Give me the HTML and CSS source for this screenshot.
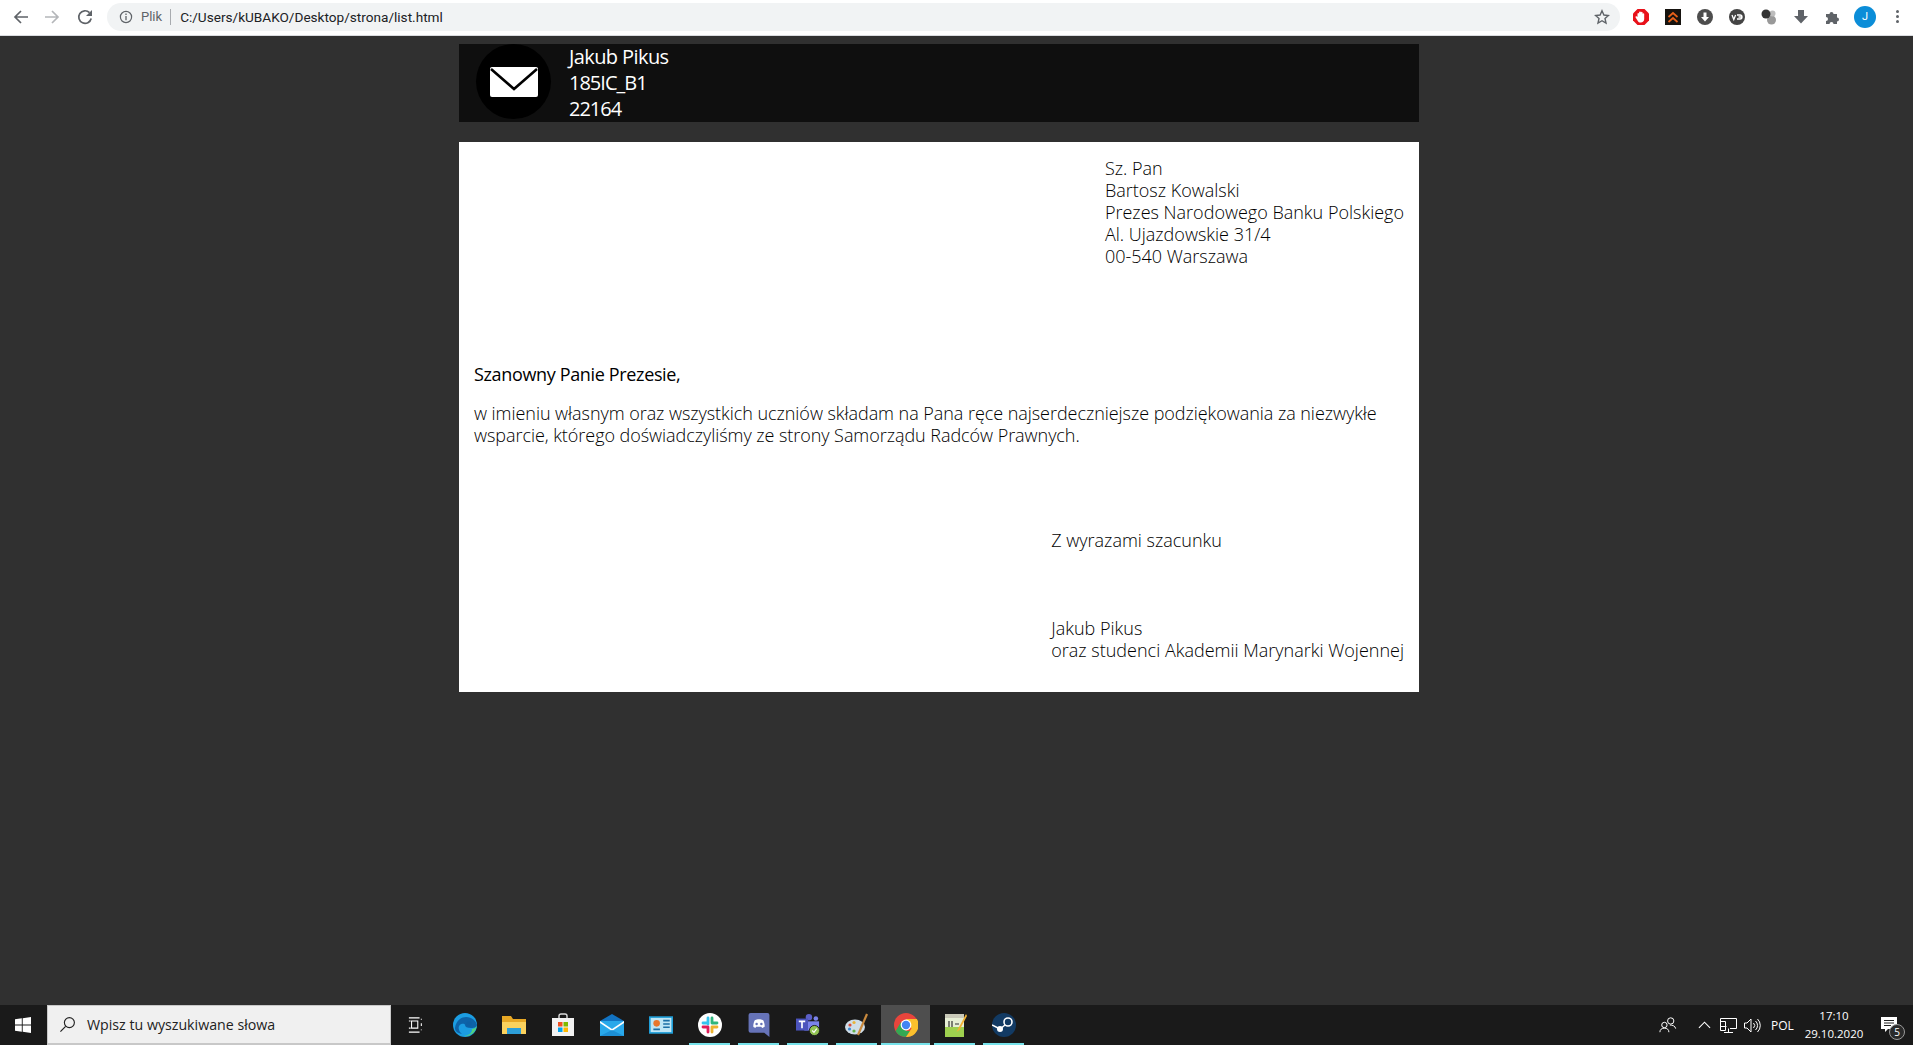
FILE: index.html
```html
<!DOCTYPE html>
<html lang="pl">
<head>
<meta charset="utf-8">
<title>list</title>
<link rel="stylesheet" href="styles.css">
</head>
<body>
<div class="toolbar">
  <div class="navs">
    <svg class="nav" viewBox="0 0 16 16"><path d="M15 8H2M8 2 2 8l6 6" fill="none" stroke="#5f6368" stroke-width="1.700"/></svg>
    <svg class="nav" viewBox="0 0 16 16"><path d="M1 8h13M8 2l6 6-6 6" fill="none" stroke="#b4b6b9" stroke-width="1.700"/></svg>
    <svg class="nav" viewBox="0 0 16 16"><path d="M14.200 9.500A6.300 6.300 0 1 1 12.500 3.600" fill="none" stroke="#5f6368" stroke-width="1.700"/><path d="M15 1v6H9z" fill="#5f6368"/></svg>
  </div>
  <div class="omnibox">
    <svg class="info" viewBox="0 0 14 14"><circle cx="7" cy="7" r="5.600" fill="none" stroke="#5f6368" stroke-width="1.200"/><path d="M7 6v4.200M7 3.600v1.400" stroke="#5f6368" stroke-width="1.300"/></svg>
    <span class="plik">Plik</span>
    <span class="sep"></span>
    <span class="url">C:/Users/kUBAKO/Desktop/strona/list.html</span>
    <svg class="star" viewBox="0 0 16 16"><path d="m8 1.800 1.900 4.200 4.500.5-3.400 3 1 4.500L8 11.700 4 14l1-4.500-3.400-3 4.500-.5z" fill="none" stroke="#5f6368" stroke-width="1.400"/></svg>
  </div>
  <div class="exts">
    <span class="ext"><svg viewBox="1 1 16 16"><path d="M5.500 1h7L17 5.500v7L12.500 17h-7L1 12.500v-7z" fill="#e8111a"/><path d="M5.500 9V5.500a1 1 0 0 1 1.600 0V4a1 1 0 0 1 1.800 0v.5a1 1 0 0 1 1.700 0v1.300a1 1 0 0 1 1.600 0V11c0 2.300-1.500 3.500-3.400 3.500-2 0-2.800-1-3.600-2.600L3.600 9.500c-.4-1 .8-1.700 1.400-.9z" fill="#fff"/></svg></span>
    <span class="ext"><svg viewBox="0 0 16 16"><rect width="16" height="16" fill="#16130f"/><path d="m3.500 8 4.500-4 4.500 4M3.500 13 8 9l4.500 4" fill="none" stroke="#e8611a" stroke-width="1.700"/></svg></span>
    <span class="ext"><svg viewBox="0 0 16 16"><circle cx="8" cy="8" r="8" fill="#4d4d4d"/><path d="M6.500 3.500h3V8h2.500L8 12.500 4 8h2.500z" fill="#fff"/></svg></span>
    <span class="ext"><svg viewBox="0 0 16 16"><circle cx="8" cy="8" r="8" fill="#444"/><path d="m3 6 1.800 4.500L6.600 6M8 6h3a2 2 0 0 1 0 4H8M9.500 8H13" fill="none" stroke="#fff" stroke-width="1.300"/></svg></span>
    <span class="ext"><svg viewBox="0 0 16 16"><circle cx="10.500" cy="11" r="4.500" fill="#999"/><circle cx="11.500" cy="4.500" r="3" fill="#bdbdbd"/><circle cx="5" cy="5" r="4.500" fill="#333"/></svg></span>
    <span class="ext"><svg viewBox="0 0 16 16"><path d="M5 1h6v6h4l-7 7.500L1 7h4z" fill="#5f6368"/></svg></span>
    <span class="ext"><svg viewBox="0 0 16 16"><path d="M1 5h3.500a2 2 0 1 1 4 0H12v3.500a2 2 0 1 1 0 4V15H8.500a2 2 0 1 0-4 0H1v-3a2 2 0 1 0 0-4z" fill="#5f6368"/></svg></span>
    <span class="avatar">J</span>
    <span class="dots"><i></i><i></i><i></i></span>
  </div>
</div>

<main class="page">
  <header class="banner">
    <div class="disc">
      <svg class="envelope" viewBox="0 0 48 30"><rect width="48" height="30" rx="2" fill="#fff"/><path d="M1 2 24 22 47 2" fill="none" stroke="#000" stroke-width="2.600"/></svg>
    </div>
    <div class="who">
      <div>Jakub Pikus</div>
      <div class="num">185IC_B1</div>
      <div class="num">22164</div>
    </div>
  </header>
  <article class="letter">
    <address class="to">
      Sz. Pan<br>
      Bartosz Kowalski<br>
      Prezes Narodowego Banku Polskiego<br>
      Al. Ujazdowskie 31/4<br>
      00-540 Warszawa
    </address>
    <p class="hello">Szanowny Panie Prezesie,</p>
    <p class="body">w imieniu własnym oraz wszystkich uczniów składam na Pana ręce najserdeczniejsze podziękowania za niezwykłe wsparcie, którego doświadczyliśmy ze strony Samorządu Radców Prawnych.</p>
    <div class="sign">
      <p class="regards">Z wyrazami szacunku</p>
      <p>Jakub Pikus<br>oraz studenci Akademii Marynarki Wojennej</p>
    </div>
  </article>
</main>

<footer class="taskbar">
  <svg class="win" viewBox="0 0 16 16"><path d="M0 2.300 6.800 1.300v6.200H0zM7.700 1.200 16 0v7.500H7.700zM0 8.400h6.800v6.300L0 13.700zM7.700 8.400H16V16l-8.300-1.200z" fill="#fff"/></svg>
  <div class="search">
    <svg class="glass" viewBox="0 0 18 18"><circle cx="11" cy="7" r="5.300" fill="none" stroke="#222" stroke-width="1.200"/><path d="M7 11 1.500 16.500" stroke="#222" stroke-width="1.300"/></svg>
    <span>Wpisz tu wyszukiwane słowa</span>
  </div>
  <div class="apps">
    <span class="app"><svg viewBox="0 0 18 18" class="s16"><path d="M1 1h12M1 17h12M4 4.500h7v8H4z M1 4.500h2M1 12.500h2M15 2v1M15 7v3M15 14v1" fill="none" stroke="#fff" stroke-width="1.200"/></svg></span>
    <span class="app"><svg viewBox="0 0 24 24"><circle cx="12" cy="12" r="12" fill="#1b9de2"/><path d="M2 15C3 7 9 4 13 4c6 0 10 4 11 8-1 3-4 3-6 3-4 0-6-1-6-3 0-1-3-2-5 0-2 1-2 6 2 9-5-1-7-3-7-6z" fill="#0d63a8"/><path d="M23.800 13c-1 7-8 11-13 10 4 0 9-3 8-7 2 0 4-1 5-3z" fill="#52d27c"/><circle cx="16" cy="11" r="2.800" fill="#0d5b9e" opacity=".35"/></svg></span>
    <span class="app"><svg viewBox="0 0 24 22"><path d="M0 2h9l2 3h13v15H0z" fill="#e8a825"/><path d="M0 8h24v12H0z" fill="#fbd25d"/><path d="M5 14h14v6H5z" fill="#2d9fd9"/></svg></span>
    <span class="app"><svg viewBox="0 0 24 24"><path d="M8 6V3a2 2 0 0 1 2-2h4a2 2 0 0 1 2 2v3" fill="none" stroke="#ddd" stroke-width="1.400"/><rect x="1" y="5" width="22" height="18" fill="#f2f2f2"/><path d="M7 9h4.500v4.500H7z" fill="#f25022"/><path d="M12.500 9H17v4.500h-4.500z" fill="#7fba00"/><path d="M7 14.500h4.500V19H7z" fill="#00a4ef"/><path d="M12.500 14.500H17V19h-4.500z" fill="#ffb900"/></svg></span>
    <span class="app"><svg viewBox="0 0 24 22"><path d="M0 7 12 0l12 7v15H0z" fill="#1273c2"/><path d="M0 7h24v15H0z" fill="#29a8ea"/><path d="M0 7 12 15 24 7 24 9 12 17 0 9z" fill="#fff"/><path d="m0 22 12-6 12 6z" fill="#1c8fd5"/></svg></span>
    <span class="app"><svg viewBox="0 0 22 18"><rect width="22" height="16" y="1" fill="#1f9ed8"/><rect x="1.500" y="2.500" width="19" height="13" fill="#bfe5f5"/><circle cx="7" cy="7.500" r="3" fill="#e8762c"/><path d="M13 5h6M13 8h6M13 11h6M4 13h6" stroke="#1d6fa5" stroke-width="1.400"/></svg></span>
    <span class="app on"><svg viewBox="0 0 24 24"><circle cx="12" cy="12" r="12" fill="#fff"/><path d="M10 5v6M5 10h5" stroke="#36c5f0" stroke-width="2.800" stroke-linecap="round"/><path d="M14 5v5M14 10h5" stroke="#2eb67d" stroke-width="2.800" stroke-linecap="round"/><path d="M14 19v-5M14 14h5" stroke="#ecb22e" stroke-width="2.800" stroke-linecap="round"/><path d="M10 19v-5M5 14h5" stroke="#e01e5a" stroke-width="2.800" stroke-linecap="round"/></svg></span>
    <span class="app on"><svg viewBox="0 0 20 23"><path d="M2 0h16a2 2 0 0 1 2 2v21l-5-4H2a2 2 0 0 1-2-2V2a2 2 0 0 1 2-2z" fill="#6673b8"/><path d="M4.500 13c0-3 1-5.500 1.500-6 1.500-1 3-1 3-1h2s1.500 0 3 1c.5.500 1.500 3 1.500 6-1 1-2.500 1.300-2.500 1.300l-.8-1.100H7.300l-.8 1.100S5 14 4.500 13z" fill="#fff"/><circle cx="7.700" cy="10.500" r="1.200" fill="#6673b8"/><circle cx="12.300" cy="10.500" r="1.200" fill="#6673b8"/></svg></span>
    <span class="app on"><svg viewBox="0 0 26 24"><circle cx="14" cy="3.500" r="3.500" fill="#5b5fc7"/><circle cx="21.500" cy="5" r="2.500" fill="#7b83eb"/><path d="M9 8h16v10H9z" fill="#7b83eb"/><rect y="5" width="13" height="13" fill="#4b53bc"/><path d="M3 8h7M6.500 8v7.500" stroke="#fff" stroke-width="1.800"/><circle cx="20" cy="18" r="5.500" fill="#92c353" stroke="#1a1a1a"/><path d="m17.500 18 2 2 3-4" fill="none" stroke="#fff" stroke-width="1.300"/></svg></span>
    <span class="app on"><svg viewBox="0 0 24 24"><ellipse cx="10" cy="14" rx="10" ry="7.500" fill="#cfdde8"/><circle cx="5" cy="12" r="1.600" fill="#d94b3c"/><circle cx="9" cy="9.500" r="1.600" fill="#e8b23a"/><circle cx="4.500" cy="16" r="1.600" fill="#3c8ed9"/><circle cx="9" cy="18" r="1.600" fill="#63b14a"/><path d="M22 1 13 22" stroke="#c98a3e" stroke-width="2.200"/></svg></span>
    <span class="app active"><svg viewBox="0 0 24 24"><circle cx="12" cy="12" r="12" fill="#e8453c"/><path d="M12 24a12 12 0 0 1-10.400-6L7 9l5 9 5 0-5.500 6z" fill="#34a853"/><path d="M12 6h10.900A12 12 0 0 1 12 24l5.500-8.500L12 6z" fill="#fbc02d"/><circle cx="12" cy="12" r="5.400" fill="#fff"/><circle cx="12" cy="12" r="4.200" fill="#4285f4"/></svg></span>
    <span class="app on"><svg viewBox="0 0 24 24"><rect x="2" y="1" width="19" height="23" fill="#e7efd6"/><rect x="2" y="1" width="19" height="4" fill="#c9c9b8"/><rect x="2" y="14" width="19" height="10" fill="#9ed04f"/><path d="M6 8v6M9 8v6M12 11h4" stroke="#333" stroke-width="1.200"/><path d="M23 1 15 16l-1.500 3 3-2L24 3z" fill="#f2b233"/></svg></span>
    <span class="app on"><svg viewBox="0 0 24 24"><circle cx="12" cy="12" r="12" fill="#123a63"/><circle cx="16" cy="9" r="4" fill="none" stroke="#fff" stroke-width="1.600"/><circle cx="8" cy="16" r="3" fill="#fff"/><path d="M0 12l8 4 5-4" fill="none" stroke="#fff" stroke-width="1.500"/></svg></span>
  </div>
  <div class="tray">
    <svg class="t-people" viewBox="0 0 20 20"><circle cx="13" cy="5.500" r="3.500" fill="none" stroke="#fff" stroke-width="1.100"/><circle cx="6" cy="10" r="3" fill="none" stroke="#fff" stroke-width="1.100"/><path d="M1 18c0-3 2-4.500 5-4.500s5 1.500 5 4.500M12 10c3 0 6 1 6.500 4" fill="none" stroke="#fff" stroke-width="1.100"/></svg>
    <svg class="t-chev" viewBox="0 0 14 8"><path d="m1 7 6-6 6 6" fill="none" stroke="#fff" stroke-width="1.200"/></svg>
    <svg class="t-net" viewBox="0 0 17 15"><path d="M.500.500h16v10H10M.500.500v8h6M8.500 10.500v4M4 14.500h9M.500 3.500h5v9h-5z" fill="none" stroke="#fff" stroke-width="1"/></svg>
    <svg class="t-vol" viewBox="0 0 17 15"><path d="M.500 5H3l4-4v13l-4-4H.500z" fill="none" stroke="#fff"/><path d="M9.500 5a3.500 3.500 0 0 1 0 5M11.500 3a6 6 0 0 1 0 9M13.500 1a9 9 0 0 1 0 13" fill="none" stroke="#fff"/></svg>
    <span class="lang">POL</span>
    <div class="clock"><div>17:10</div><div>29.10.2020</div></div>
    <div class="notes">
      <svg class="bubble" viewBox="0 0 16 16"><path d="M0 0h16v12H7l-3 3v-3H0z" fill="#fff"/><path d="M3 3.500h10M3 6h10M3 8.500h7" stroke="#222"/></svg>
      <span class="count">5</span>
    </div>
  </div>
</footer>
</body>
</html>
```

FILE: styles.css
```css
* { box-sizing: border-box; }
html, body { height: 100%; }
body {
  margin: 0;
  display: flex;
  flex-direction: column;
  height: 1045px;
  overflow: hidden;
  background: #303030;
  font-family: "Open Sans", "Liberation Sans", sans-serif;
}
.toolbar {
  height: 36px;
  flex: none;
  background: #fff;
  display: flex;
  align-items: center;
  padding: 0 0 2px 13px;
  border-bottom: 1px solid #dadce0;
}
.navs { display: flex; width: 94px; flex: none; gap: 15px; }
.nav { width: 16px; height: 16px; }
.nav:last-child { margin-left: 2px; }
.omnibox {
  width: 1513px;
  flex: none;
  height: 28px;
  border-radius: 14px;
  background: #f1f3f4;
  display: flex;
  align-items: center;
  padding: 0 10px 0 12px;
  font: 13.600px "Roboto", "Liberation Sans", sans-serif;
}
.info { width: 14px; height: 14px; flex: none; }
.plik { color: #5f6368; margin-left: 8px; font-size: 13px; }
.sep { width: 1px; height: 16px; background: #a8abaf; margin: 0 9px 0 8px; }
.url { color: #202124; flex: 1; }
.star { width: 16px; height: 16px; }
.exts { display: flex; align-items: center; margin-left: 5px; }
.ext { width: 32px; height: 24px; display: flex; align-items: center; justify-content: center; }
.ext svg { width: 16px; height: 16px; }
.avatar {
  width: 22px; height: 22px; margin: 0 5px;
  border-radius: 50%;
  background: #0b8dd8;
  color: #fff;
  font: 11px/22px "Roboto", sans-serif;
  text-align: center;
}
.dots { width: 32px; display: flex; flex-direction: column; align-items: center; gap: 2px; }
.dots i { width: 3px; height: 3px; border-radius: 50%; background: #5f6368; }

.page { flex: 1; padding-top: 8px; width: 960px; margin-left: 459px; }
.banner {
  height: 78px;
  background: #0f0f0f;
  display: flex;
  padding-left: 17px;
  color: #fff;
  font-size: 20px;
  line-height: 26px;
  letter-spacing: -.6px;
}
.num { letter-spacing: -1px; }
.disc {
  width: 75px; height: 75px;
  border-radius: 50%;
  background: #000;
  display: flex; align-items: center; justify-content: center;
  flex: none;
}
.envelope { width: 48px; height: 30px; }
.who { margin-left: 18px; }
.letter {
  margin-top: 20px;
  background: #fff;
  color: #000;
  height: 550px;
  padding: 15px 15px 0;
  font-size: 18px;
  font-weight: 300;
  line-height: 22px;
}
.to { font-style: normal; width: fit-content; margin-left: auto; }
.letter p { margin: 0; }
.letter .hello { font-weight: 500; letter-spacing: -.35px; margin-top: 96px; }
.letter .body { margin-top: 17px; letter-spacing: -.05px; }
.sign { width: fit-content; margin-left: auto; margin-top: 83px; }
.letter .regards { margin-bottom: 66px; }

.taskbar {
  height: 40px;
  flex: none;
  background: #1a1a1a;
  display: flex;
  align-items: center;
  color: #fff;
}
.win { width: 16px; height: 16px; margin: 0 16px 0 15px; flex: none; }
.search {
  width: 344px; height: 40px; flex: none;
  background: #f0f0f0;
  border: 1px solid #c8c8c8;
  border-bottom-width: 2px;
  display: flex; align-items: center;
  padding-left: 11px;
  color: #222;
  font: 14.200px "Open Sans", "Liberation Sans", sans-serif;
}
.glass { width: 17px; height: 17px; margin-right: 11px; }
.apps { display: flex; }
.app {
  width: 49px; height: 40px;
  display: flex; align-items: center; justify-content: center;
  position: relative;
}
.app svg { width: 24px; height: 24px; }
.app svg.s16 { width: 16px; height: 16px; }
.app.active { background: #4e4e4e; }
.app.on::after, .app.active::after {
  content: "";
  position: absolute;
  left: 4px; right: 4px; bottom: 0;
  height: 2px;
  background: #76e2ea;
}
.app.active::after { left: 0; right: 0; }
.tray { margin-left: auto; display: flex; align-items: center; font: 12px "Open Sans", sans-serif; }
.tray svg { flex: none; }
.t-people { width: 18px; height: 18px; margin-right: 21px; }
.t-chev { width: 13px; height: 8px; margin-right: 9px; }
.t-net { width: 17px; height: 15px; margin-right: 7px; }
.t-vol { width: 17px; height: 15px; margin-right: 10px; }
.lang { width: 23px; }
.clock { width: 62px; margin-left: 9px; text-align: center; font-size: 11.500px; line-height: 18px; }
.notes { width: 48px; height: 40px; display: flex; align-items: center; justify-content: center; position: relative; }
.bubble { width: 16px; height: 16px; }
.count {
  position: absolute;
  right: 8px; bottom: 5px;
  width: 16px; height: 16px;
  border-radius: 50%;
  background: #2a2a2a;
  border: 1px solid #999;
  font-size: 10px; line-height: 14px; text-align: center;
}
```
